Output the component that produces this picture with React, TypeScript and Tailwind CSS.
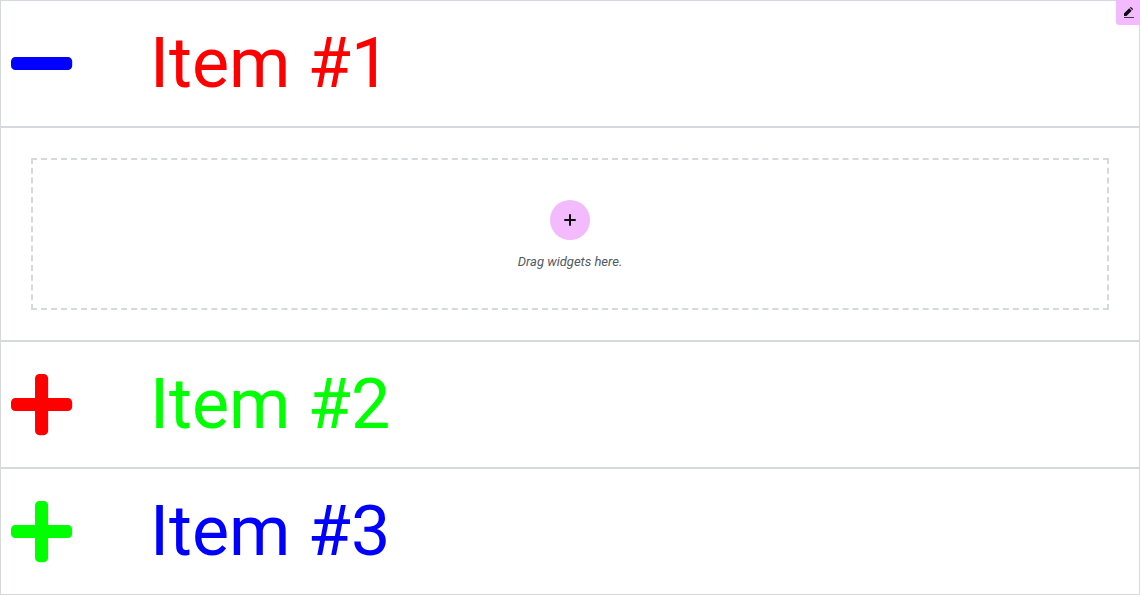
type Glyph = "minus" | "plus";

const items: { title: string; tone: string; iconTone: string; open: boolean }[] = [
  { title: "Item #1", tone: "text-[#ff0000]", iconTone: "text-[#0000ff]", open: true },
  { title: "Item #2", tone: "text-[#00ff00]", iconTone: "text-[#ff0000]", open: false },
  { title: "Item #3", tone: "text-[#0000ff]", iconTone: "text-[#00ff00]", open: false },
];

const glyphs: Record<Glyph, string> = {
  minus:
    "M416 208H32c-17.67 0-32 14.33-32 32v32c0 17.67 14.33 32 32 32h384c17.67 0 32-14.33 32-32v-32c0-17.67-14.33-32-32-32z",
  plus: "M416 208H272V64c0-17.67-14.33-32-32-32h-32c-17.67 0-32 14.33-32 32v144H32c-17.67 0-32 14.33-32 32v32c0 17.67 14.33 32 32 32h144v144c0 17.67 14.33 32 32 32h32c17.67 0 32-14.33 32-32V304h144c17.67 0 32-14.33 32-32v-32c0-17.67-14.33-32-32-32z",
};

function ToggleIcon({ name, tone }: { name: Glyph; tone: string }) {
  return (
    <svg viewBox="0 -4.4 454 520" className={`h-[71px] w-[62px] shrink-0 ${tone}`} fill="currentColor" aria-hidden="true">
      <path d={glyphs[name]} />
    </svg>
  );
}

function DropZone() {
  return (
    <div className="border border-[#d5d8dc] p-[30px]">
      <div className="flex flex-col items-center gap-[15px] border-2 border-dashed border-[#d5d8dc] py-10">
        <button
          type="button"
          aria-label="Add widget"
          className="flex size-10 items-center justify-center rounded-full bg-[#f3bafd] text-[#0c0d0e]"
        >
          <svg viewBox="0 0 12 12" className="size-3" fill="none" stroke="currentColor" strokeWidth="2" strokeLinecap="round" aria-hidden="true">
            <path d="M6 1v10M1 6h10" />
          </svg>
        </button>
        <p className="text-[13px] leading-[13px] text-[#515962] italic">Drag widgets here.</p>
      </div>
    </div>
  );
}

export default function App() {
  return (
    <main className="relative bg-white font-['Roboto',sans-serif]">
      {items.map((item) => (
        <section key={item.title}>
          <h2 className="border border-[#d5d8dc]">
            <button
              type="button"
              aria-expanded={item.open}
              className={`flex w-full items-center gap-[77px] p-[10px] text-left text-[70px] leading-[105px] font-normal ${item.tone}`}
            >
              <ToggleIcon name={item.open ? "minus" : "plus"} tone={item.iconTone} />
              <span>{item.title}</span>
            </button>
          </h2>
          {item.open && <DropZone />}
        </section>
      ))}
      <button
        type="button"
        aria-label="Edit"
        className="absolute top-0 right-0 flex h-[25px] w-6 items-center justify-center rounded-bl-[3px] bg-[#f3bafd] text-[#0c0d0e]"
      >
        <svg viewBox="-2 0 12 11" className="h-[11px] w-3" fill="currentColor" aria-hidden="true">
          <path d="M0 6.5 5.2 1.3 7.7 3.8 2.5 9H0zM5.9 .7 6.4.2q.4-.3.8 0L8.8 1.8q.4.4 0 .8L8.3 3.1zM0 10h10v.8H0z" />
        </svg>
      </button>
    </main>
  );
}
